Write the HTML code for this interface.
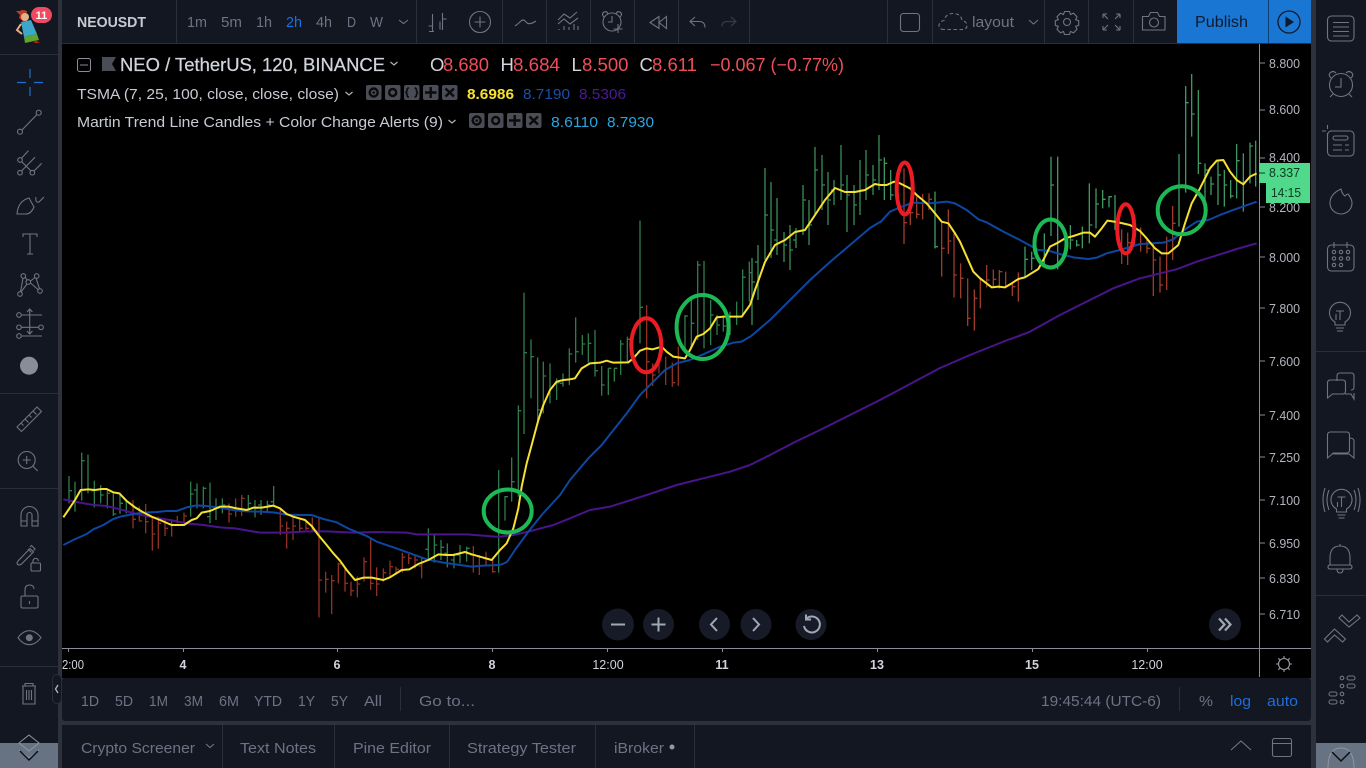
<!DOCTYPE html>
<html lang="en"><head><meta charset="utf-8"><title>NEOUSDT chart</title>
<style>
html,body{margin:0;padding:0;background:#000;width:1366px;height:768px;overflow:hidden}
svg{display:block;font-family:"Liberation Sans",Arial,sans-serif}
.i{fill:none;stroke:#6f7482;stroke-width:1.1}
.m{fill:#6c7384;font-size:15px}
.p{fill:#b2b5be;font-size:12.5px;text-anchor:start}
.t{fill:#d1d4dc;font-size:12.5px;text-anchor:middle}
.nb{fill:#171b27}
.ni{fill:none;stroke:#a0a8b4;stroke-width:2}
.tb{fill:#4a4d56}
.ti{fill:none;stroke:#0b0b0d;stroke-width:2.4}
.lg{stroke-width:.25px;paint-order:stroke}
</style></head><body>
<svg width="1366" height="768" viewBox="0 0 1366 768" xmlns="http://www.w3.org/2000/svg">
<rect width="1366" height="768" fill="#2d313c"/>
<!-- chart -->
<rect x="62" y="44" width="1249" height="634" fill="#000"/>
<!-- bars: first segment (zoom coords) -->
<g transform="translate(60,440) scale(.33333)" fill="none" stroke-width="4">
<path stroke="#2f7a4b" d="M27 108V190M27 152h9M45 125V215M65 38V182M65 62h9M84 44V160M103 122V202M103 152h-9M122 135V190M122 165h9M142 150V205M142 160h9M160 160V228M160 222h9M180 165V222M180 190h9M199 180V220M392 125V230M392 162h9M411 130V205M411 150h-9M430 140V205M430 145h9M450 128V250M450 230h-9M468 175V240M468 205h9M487 175V220M487 195h9M565 165V215M565 190h9M585 180V232M585 205h9M603 180V225M603 195h-9M622 182V215M622 195h9M641 138V200M641 185h-9M1105 265V358M1105 328h-9M1123 285V368M1123 315h9M1143 300V360M1143 322h9M1162 310V382M1162 340h-9M1182 340V385M1182 360h-9M1200 315V370M1200 345h-9M1220 320V365M1220 325h9M1316 90V398"/>
<path stroke="#8f3025" d="M219 180V265M219 238h9M238 200V245M238 243h9M257 192V280M257 245h9M277 230V332M277 282h9M295 230V326M295 250h9M315 235V288M315 265h9M335 238V290M335 252h-9M352 228V250M372 218V248M372 228h9M507 190V248M507 222h9M527 175V230M527 205h9M545 165V228M545 175h9M661 205V285M661 258h9M680 245V326M680 265h9M699 225V300M699 258h9M719 235V278M719 265h9M738 240V270M738 265h9M757 232V275M777 235V532M777 420h9M797 395V458M797 418h9M815 405V522M815 422h9M835 368V430M835 372h9M855 385V455M855 430h9M873 425V468M873 452h9M892 410V472M892 432h9M912 352V425M912 365h9M932 296V450M932 430h9M950 382V468M950 432h9M970 385V425M970 398h9M990 362V410M990 380h9M1008 380V400M1008 388h9M1027 338V398M1027 352h9M1046 342V372M1046 355h9M1065 345V385M1065 360h9M1085 352V415M1085 378h-9M1240 318V398M1240 345h-9M1258 345V405M1258 378h-9M1278 335V378M1298 360V398M1298 395h9"/>
</g>
<!-- bars: second segment -->
<g transform="translate(470,200) scale(.33333)" fill="none" stroke-width="4">
<path stroke="#2f7a4b" d="M105 888V962M105 890h9M125 772V905M125 845h9M145 616V890M145 632h9M162 278V702M162 458h9M183 418V595M183 470h9M203 472V672M203 630h9M220 485V640M220 528h9M240 490V610M240 582h-9M260 535V600M260 548h9M279 520V560M279 550h-9M298 445V555M298 462h9M317 352V488M317 455h9M337 405V465M337 432h9M355 400V488M355 430h9M375 390V530M375 512h9M395 498V587M395 555h9M415 505V585M415 505h9M433 505V545M433 505h9M452 420V525M452 432h9M472 410V490M472 418h9M510 62V430M510 322h9M645 345V460M645 348h9M664 290V440M664 370h9M683 183V420M683 195h9M702 183V445M722 300V435M722 345h9M741 345V405M741 375h9M760 350V395M760 378h9M780 335V405M800 305V375M818 208V350M818 232h9M838 185V305M838 218h9"/>
<path stroke="#8f3025" d="M530 315V595M530 485h9M548 490V558M548 525h9M567 460V520M587 470V555M607 488V560M607 548h9M625 440V558"/>
</g>
<!-- bars: gap segment (absolute) -->
<g fill="none" stroke="#388a58" stroke-width="1.33">
<path d="M752 258V325M752 282h3M758 245V300M758 262h-3M765 168V260M765 215h3M771 182V258M771 230h3M777 198V255M777 240h-3M784 232V262M784 245h3M790 225V270M790 250h3M796 228V248M796 240h-3M803 185V235M803 200h3M809 200V245M809 225h3M815 147V215M815 170h3M822 155V210M822 185h3M828 172V225M828 200h3M834 180V205M834 190h-3M841 145V200M841 185h3M847 175V232M847 195h3M854 185V225M854 205h3M860 160V215M860 190h3M866 150V200M866 175h3M873 165V195M873 180h3M879 135V190M879 160h3"/>
</g>
<!-- bars: third segment -->
<g transform="translate(880,70) scale(.33333)" fill="none" stroke-width="4">
<path stroke="#3f9660" d="M13 262V390M13 280h9M32 300V390M32 375h9M165 365V535M165 530h9M435 530V622M435 568h9M455 545V600M455 565h9M493 490V590M513 260V498M513 345h9M533 260V598M571 465V538M571 510h9M590 510V530M590 525h9M607 470V535M628 340V520M628 465h9M648 355V475M648 402h9M668 360V415M668 388h9M687 378V412M687 380h9M705 375V480M897 252V470M917 48V368M917 98h9M935 12V200M935 132h9M955 60V312M955 280h9M975 280V390M975 300h9M993 320V375M993 342h9M1014 270V405M1014 315h9M1033 300V410M1033 345h9M1052 330V385M1052 378h9M1070 222V385M1070 272h9M1090 250V425M1110 218V340M1110 228h9M1127 212V350"/>
<path stroke="#9c3a2b" d="M72 295V522M72 458h9M91 400V465M91 428h9M110 380V445M110 433h9M128 372V448M147 370V420M147 388h9M185 455V620M185 535h9M205 418V552M205 513h9M222 490V682M222 615h9M242 580V685M242 625h9M263 625V768M263 745h9M283 658V782M283 685h9M301 628V715M320 585V652M320 630h9M340 598V650M340 628h9M358 600V655M358 605h9M377 605V650M397 640V678M397 650h9M415 607V695M725 478V582M743 488V585M743 518h9M763 480V530M782 472V545M801 505V550M801 535h9M820 520V678M820 570h9M840 560V668M840 645h9M860 500V660M878 408V570M878 460h9"/>
</g>
<!-- purple -->
<g fill="none" stroke="#4a148c" stroke-linejoin="round">
<polyline transform="translate(60,440) scale(.33333)" stroke-width="6" points="10,178 60,188 100,195 140,198 180,208 230,222 280,232 330,240 380,250 430,255 480,262 525,265 600,278 680,278 740,274 800,274 880,278 950,276 1040,278 1070,283 1220,283 1320,291"/>
<polyline transform="translate(470,200) scale(.33333)" stroke-width="6" points="90,1010 130,1005 175,995 250,975 300,955 360,930 420,920 530,885 620,855 700,835 780,815 840,795"/>
<polyline stroke-width="2" points="750,465 770,455 795,442 820,430 850,415 880,400 910,384 940,368 970,355 1000,343 1010,339"/>
<polyline transform="translate(880,70) scale(.33333)" stroke-width="6" points="390,808 450,785 540,735 620,695 700,655 780,625 890,598 950,575 1030,550 1070,537 1130,520"/>
</g>
<!-- blue -->
<g fill="none" stroke="#0d47a1" stroke-linejoin="round">
<polyline transform="translate(60,440) scale(.33333)" stroke-width="6" points="10,315 40,300 80,282 100,268 130,255 160,237 180,230 220,222 250,218 290,216 320,213 350,213 380,202 410,196 440,198 480,203 520,210 560,214 600,215 640,217 680,224 720,225 755,225 790,237 830,247 870,268 920,288 950,305 1000,322 1050,340 1100,358 1150,368 1200,375 1235,380 1270,377 1320,375"/>
<polyline stroke-width="2" points="500,565 507,562 515,550"/>
<polyline transform="translate(470,200) scale(.33333)" stroke-width="6" points="135,1050 175,995 215,945 270,885 300,840 355,775 395,735 470,640 510,585 550,545 585,510 620,490 660,480 700,463 750,440 790,428 815,425 840,410"/>
<polyline stroke-width="2" points="750,337 770,320 790,300 810,280 830,262 850,245 870,228 880,222"/>
<polyline transform="translate(880,70) scale(.33333)" stroke-width="6" points="0,458 30,425 70,408 100,398 150,400 200,395 225,400 260,420 295,448 320,457 370,485 420,510 475,540 505,542 540,552 580,562 625,567 650,563 680,550 720,540 780,522 850,518 880,508 920,475 950,455 985,450 1020,435 1060,420 1130,395"/>
</g>
<!-- yellow -->
<g fill="none" stroke="#f7e12f" stroke-linejoin="round">
<polyline transform="translate(60,440) scale(.33333)" stroke-width="6" points="10,232 25,210 45,180 62,150 85,148 105,150 125,147 140,147 160,157 178,160 200,183 225,202 250,217 275,230 300,240 335,255 372,255 395,240 410,235 425,218 450,213 480,200 505,200 530,205 560,210 580,203 605,203 640,197 660,205 680,222 700,230 735,240 755,258 775,285 800,315 820,340 840,362 860,390 885,420 910,413 935,413 970,420 990,412 1025,390 1048,388 1075,372 1105,360 1135,343 1160,345 1180,345 1215,336 1235,343 1260,350 1295,360 1320,330"/>
<polyline transform="translate(470,200) scale(.33333)" stroke-width="6" points="90,1050 110,1030 130,985 145,925 155,860 170,790 185,735 205,660 220,615 240,570 260,545 280,540 300,538 315,535 335,505 360,490 390,488 410,482 430,488 475,487 490,475 510,452 530,445 548,448 575,440 590,455 610,470 645,475 660,450 680,410 700,402 720,385 740,352 760,350 790,350 815,350 840,315"/>
<polyline stroke-width="2" points="750,305 755,290 765,262 775,245 785,240 795,232 805,230 815,215 825,200 835,188 845,192 855,192 865,190 875,184 880,185"/>
<polyline transform="translate(880,70) scale(.33333)" stroke-width="6" points="0,345 20,345 42,335 60,340 90,355 110,375 140,400 165,430 185,455 205,460 225,490 240,515 260,560 280,605 300,625 335,652 355,650 375,652 395,640 415,627 435,622 475,597 495,560 510,530 530,520 555,505 580,498 610,488 630,488 645,500 665,475 682,452 710,456 750,465 780,483 800,505 825,535 845,550 865,550 895,525 915,460 935,400 960,355 990,295 1010,272 1030,270 1050,305 1070,330 1090,343 1110,320 1130,310"/>
</g>
<!-- annotations -->
<g fill="none" stroke-width="4">
<ellipse cx="507.7" cy="511" rx="24" ry="21.5" stroke="#1db954"/>
<ellipse cx="702.6" cy="327" rx="26" ry="32" stroke="#1db954"/>
<ellipse cx="1050.5" cy="243.5" rx="16" ry="24" stroke="#1db954"/>
<ellipse cx="1181.7" cy="210.3" rx="24" ry="24" stroke="#1db954"/>
<ellipse cx="646.3" cy="345.3" rx="15" ry="27" stroke="#ed1c24"/>
<ellipse cx="904.7" cy="188.5" rx="8" ry="26" stroke="#ed1c24"/>
<ellipse cx="1125.8" cy="228.8" rx="8.5" ry="24.5" stroke="#ed1c24"/>
</g>
<!-- axes -->
<path d="M1259.5 44V677M62 648.5H1311" stroke="#8a8d96" fill="none" shape-rendering="crispEdges"/>
<path d="M1259 63h6M1259 110h6M1259 158h6M1259 207h6M1259 257h6M1259 308h6M1259 361h6M1259 415h6M1259 457h6M1259 500h6M1259 543h6M1259 578h6M1259 614h6M183.5 648v4M337.5 648v4M492.5 648v4M607.5 648v4M722.5 648v4M877.5 648v4M1032.5 648v4M1147.5 648v4M68.5 648v4" stroke="#8a8d96" shape-rendering="crispEdges"/>
<text class="p" x="1269" y="68" textLength="31" lengthAdjust="spacingAndGlyphs">8.800</text>
<text class="p" x="1269" y="114" textLength="31" lengthAdjust="spacingAndGlyphs">8.600</text>
<text class="p" x="1269" y="162" textLength="31" lengthAdjust="spacingAndGlyphs">8.400</text>
<text class="p" x="1269" y="212" textLength="31" lengthAdjust="spacingAndGlyphs">8.200</text>
<text class="p" x="1269" y="262" textLength="31" lengthAdjust="spacingAndGlyphs">8.000</text>
<text class="p" x="1269" y="313" textLength="31" lengthAdjust="spacingAndGlyphs">7.800</text>
<text class="p" x="1269" y="366" textLength="31" lengthAdjust="spacingAndGlyphs">7.600</text>
<text class="p" x="1269" y="420" textLength="31" lengthAdjust="spacingAndGlyphs">7.400</text>
<text class="p" x="1269" y="462" textLength="31" lengthAdjust="spacingAndGlyphs">7.250</text>
<text class="p" x="1269" y="505" textLength="31" lengthAdjust="spacingAndGlyphs">7.100</text>
<text class="p" x="1269" y="548" textLength="31" lengthAdjust="spacingAndGlyphs">6.950</text>
<text class="p" x="1269" y="583" textLength="31" lengthAdjust="spacingAndGlyphs">6.830</text>
<text class="p" x="1269" y="619" textLength="31" lengthAdjust="spacingAndGlyphs">6.710</text>
<rect x="1259" y="163" width="51" height="20" fill="#50d98a"/>
<rect x="1266" y="183" width="44" height="20" fill="#50d98a"/>
<path d="M1259 173h6" stroke="#0b3d24"/>
<text x="1269" y="177" font-size="12.5" fill="#0d3a22" textLength="31" lengthAdjust="spacingAndGlyphs">8.337</text>
<text x="1271" y="197" font-size="12.5" fill="#0d3a22" textLength="30" lengthAdjust="spacingAndGlyphs">14:15</text>
<!-- time axis -->
<text x="62" y="669" font-size="12.5" fill="#d1d4dc" textLength="22" lengthAdjust="spacingAndGlyphs">2:00</text>
<text class="t" x="183" y="669" font-weight="700">4</text>
<text class="t" x="337" y="669" font-weight="700">6</text>
<text class="t" x="492" y="669" font-weight="700">8</text>
<text class="t" x="608" y="669">12:00</text>
<text class="t" x="722" y="669" font-weight="700">11</text>
<text class="t" x="877" y="669" font-weight="700">13</text>
<text class="t" x="1032" y="669" font-weight="700">15</text>
<text class="t" x="1147" y="669">12:00</text>
<g class="i" style="stroke:#9a9da6"><circle cx="1284" cy="664" r="5.5"/><path d="M1284 656v2M1284 670v2M1276 664h2M1290 664h2M1278.3 658.3l1.4 1.4M1288.3 668.3l1.4 1.4M1278.3 669.7l1.4-1.4M1288.3 659.7l1.4-1.4"/></g>
<!-- nav buttons -->
<circle class="nb" cx="618" cy="624.5" r="16"/><path class="ni" d="M611 624.5h14"/>
<circle class="nb" cx="658.5" cy="624.5" r="15.5"/><path class="ni" d="M651.5 624.5h14M658.5 617.5v14"/>
<circle class="nb" cx="714.5" cy="624.5" r="15.5"/><path class="ni" d="M717 618l-6 6.5 6 6.5"/>
<circle class="nb" cx="756" cy="624.5" r="15.5"/><path class="ni" d="M753 618l6 6.5-6 6.5"/>
<circle class="nb" cx="811" cy="624.5" r="15.5"/><path class="ni" d="M806 619a8 8 0 1 1-2 7M806 614.5v5h5"/>
<circle class="nb" cx="1225" cy="624.5" r="16"/><path class="ni" d="M1219 618.5l5.5 6-5.5 6M1225 618.5l5.5 6-5.5 6" style="stroke-width:2.2"/>
<!-- legend -->
<rect x="77.5" y="58.5" width="13" height="13" rx="2" fill="none" stroke="#8a8d96"/><path d="M80 65h8" stroke="#8a8d96"/>
<path d="M102 57h14l-4 7 4 7h-14z" fill="#4a4d58"/>
<text class="lg" x="120" y="71" font-size="18.5" fill="#d1d4dc" stroke="#d1d4dc" textLength="265" lengthAdjust="spacingAndGlyphs">NEO / TetherUS, 120, BINANCE</text>
<path d="M390.5 62l3.5 3 3.5-3" fill="none" stroke="#b2b5be" stroke-width="1.2"/>
<g font-size="18.5" fill="#f04d57">
<text x="430" y="71" style="fill:#d1d4dc">O</text><text x="443" y="71" textLength="46" lengthAdjust="spacingAndGlyphs">8.680</text>
<text x="500.5" y="71" style="fill:#d1d4dc">H</text><text x="513" y="71" textLength="47" lengthAdjust="spacingAndGlyphs">8.684</text>
<text x="571.5" y="71" style="fill:#d1d4dc">L</text><text x="582" y="71" textLength="46.5" lengthAdjust="spacingAndGlyphs">8.500</text>
<text x="639.5" y="71" style="fill:#d1d4dc">C</text><text x="652" y="71" textLength="45" lengthAdjust="spacingAndGlyphs">8.611</text>
<text x="710" y="71" textLength="134" lengthAdjust="spacingAndGlyphs">−0.067 (−0.77%)</text>
</g>
<text x="77" y="99" font-size="15" fill="#c8cbd3" textLength="262" lengthAdjust="spacingAndGlyphs">TSMA (7, 25, 100, close, close, close)</text>
<path d="M345.5 92l3.5 3 3.5-3" fill="none" stroke="#b2b5be" stroke-width="1.2"/>
<g>
<rect class="tb" x="366" y="85" width="15.5" height="15" rx="2"/><circle class="ti" cx="373.7" cy="92.5" r="4"/><circle cx="373.7" cy="92.5" r="1.3" fill="#0b0b0d"/>
<rect class="tb" x="385" y="85" width="15.5" height="15" rx="2"/><circle class="ti" cx="392.7" cy="92.5" r="3.5"/>
<rect class="tb" x="404" y="85" width="15.5" height="15" rx="2"/><path class="ti" d="M409 88q-2 0-2 2v1l-1 1.5 1 1.5v1q0 2 2 2M414.5 88q2 0 2 2v1l1 1.5-1 1.5v1q0 2-2 2" style="stroke-width:1.6"/>
<rect class="tb" x="423" y="85" width="15.5" height="15" rx="2"/><path class="ti" d="M430.7 87v11M425 92.5h11.5"/>
<rect class="tb" x="442" y="85" width="15.5" height="15" rx="2"/><path class="ti" d="M445.5 88.5l8.500 8M454 88.5l-8.500 8"/>
</g>
<text x="467" y="99" font-size="15" font-weight="700" fill="#f7e12f" textLength="47" lengthAdjust="spacingAndGlyphs">8.6986</text>
<text x="523" y="99" font-size="15" fill="#1a4fa8" textLength="47" lengthAdjust="spacingAndGlyphs">8.7190</text>
<text x="579" y="99" font-size="15" fill="#4a1a96" textLength="47" lengthAdjust="spacingAndGlyphs">8.5306</text>
<text x="77" y="127" font-size="15" fill="#c8cbd3" textLength="366" lengthAdjust="spacingAndGlyphs">Martin Trend Line Candles + Color Change Alerts (9)</text>
<path d="M448.5 120l3.5 3 3.5-3" fill="none" stroke="#b2b5be" stroke-width="1.2"/>
<g>
<rect class="tb" x="469" y="113" width="15.5" height="15" rx="2"/><circle class="ti" cx="476.7" cy="120.5" r="4"/><circle cx="476.7" cy="120.5" r="1.3" fill="#0b0b0d"/>
<rect class="tb" x="488" y="113" width="15.5" height="15" rx="2"/><circle class="ti" cx="495.7" cy="120.5" r="3.5"/>
<rect class="tb" x="507" y="113" width="15.5" height="15" rx="2"/><path class="ti" d="M514.7 115v11M509 120.5h11.5"/>
<rect class="tb" x="526" y="113" width="15.5" height="15" rx="2"/><path class="ti" d="M529.5 116.5l8.5 8M538 116.5l-8.5 8"/>
</g>
<text x="551" y="127" font-size="15" fill="#2aa6df" textLength="47" lengthAdjust="spacingAndGlyphs">8.6110</text>
<text x="607" y="127" font-size="15" fill="#2aa6df" textLength="47" lengthAdjust="spacingAndGlyphs">8.7930</text>

<!-- top toolbar -->
<rect x="62" y="0" width="1249" height="43" fill="#131722"/>
<path d="M176.5 0v43M416.5 0v43M502.5 0v43M546.5 0v43M590.5 0v43M634.5 0v43M678.5 0v43M749.5 0v43M887.5 0v43M932.5 0v43M1044.5 0v43M1088.5 0v43M1133.5 0v43" stroke="#2a2e39"/>
<text x="77" y="27" font-size="14.5" font-weight="700" fill="#c6cad2" textLength="69" lengthAdjust="spacingAndGlyphs">NEOUSDT</text>
<text class="m" x="187" y="27" textLength="20" lengthAdjust="spacingAndGlyphs">1m</text>
<text class="m" x="221" y="27" textLength="21" lengthAdjust="spacingAndGlyphs">5m</text>
<text class="m" x="256" y="27" textLength="16" lengthAdjust="spacingAndGlyphs">1h</text>
<text x="286" y="27" font-size="15" fill="#1c6fdc" textLength="16" lengthAdjust="spacingAndGlyphs">2h</text>
<text class="m" x="316" y="27" textLength="16" lengthAdjust="spacingAndGlyphs">4h</text>
<text class="m" x="347" y="27" textLength="9" lengthAdjust="spacingAndGlyphs">D</text>
<text class="m" x="370" y="27" textLength="13" lengthAdjust="spacingAndGlyphs">W</text>
<g class="i">
<path d="M399 20l4.500 3.500 4.500-3.500"/>
<path d="M432.500 14v17M428.500 26h4M442.500 13v17M442.500 19h4M429 31.500h5M440 21.500v8"/>
<circle cx="480" cy="22" r="10.500"/><path d="M480 16.500v11M474.500 22h11"/>
<path d="M515 26q3-2 6-5 2-2 4 0l2 2q3 2 9-2"/>
<path d="M558 20l6-6 6 4 7-6M558 24l6-5 6 5 8-6M559 30v-1M564 30v-4M569 30v-3M574 30v-6M578 30v-4"/>
<circle cx="612" cy="22" r="9"/><path d="M612 16v6h-4M604 17q-3-3 0-5 3-1 4 2M620 17q3-3 0-5-3-1-4 2M618 24v9M613.500 29h9"/>
<path d="M659 16.500l-9 6 9 6zM666.500 16.500l-7.500 6 7.500 6z"/>
<path d="M695 17l-5 4.500 5 4.500M690 21.500h9q6 0 6 6"/>
</g>
<path d="M731 17l5 4.500-5 4.500M736 21.500h-9q-5 0-5 5" fill="none" stroke="#363a45" stroke-width="1.200"/>
<g class="i">
<rect x="900.500" y="13.500" width="19" height="18" rx="3"/>
<path d="M944 29.500q-5 0-5-4 0-4 5-5 2-7 9-7 8 0 9 7 5 1 5 5 0 4-5 4z" stroke-dasharray="3.500 2.500"/>
<path d="M1029 20l4.500 4 4.500-4"/>
<circle cx="1067" cy="22" r="3.500"/><path d="M1064.500 11.500h5l1 3 3-1.300 3.500 3.500-1.300 3 3 1v4.600l-3 1 1.300 3-3.500 3.500-3-1.300-1 3h-5l-1-3-3 1.300-3.500-3.500 1.300-3-3-1v-4.600l3-1-1.300-3 3.500-3.500 3 1.300z"/>
<path d="M1103 14l5 5M1103 14h4M1103 14v4M1120 14l-5 5M1120 14h-4M1120 14v4M1103 30l5-5M1103 30h4M1103 30v-4M1120 30l-5-5M1120 30h-4M1120 30v-4"/>
<path d="M1142.500 16.500h6l2-4h7l2 4h5.500v13.500h-22.500z"/><circle cx="1154" cy="22.500" r="4.500"/>
</g>
<text x="972" y="27" font-size="15" fill="#6f7482" textLength="42" lengthAdjust="spacingAndGlyphs">layout</text>
<rect x="1177" y="0" width="134" height="43" fill="#1976d2"/>
<path d="M1268.500 0v43" stroke="#0e3f74"/>
<text x="1195" y="27" font-size="16" fill="#0f1a2e" textLength="53" lengthAdjust="spacingAndGlyphs">Publish</text>
<circle cx="1289" cy="22" r="11" fill="none" stroke="#0f1a2e" stroke-width="1.300"/><path d="M1285.500 16.500l8.500 5.500-8.500 5.500z" fill="#0f1a2e"/>
<rect x="62" y="43" width="1249" height="1" fill="#2a2e39"/>

<!-- left toolbar -->
<rect x="0" y="0" width="58" height="768" fill="#131722"/>
<path d="M0 54.500h58M0 393.500h58M0 488.500h58M0 666.500h58" stroke="#2a2e39"/>
<g>
<path d="M27 11q-5-2-7 0l-4 0 4 4-1 3 5 4z" fill="#c23c22"/>
<circle cx="25" cy="17" r="4" fill="#e3b08a"/>
<path d="M21 22l10-2 6 14-13 3z" fill="#3ea7c9"/>
<path d="M21 24l-4 6 5 4" fill="none" stroke="#e3b08a" stroke-width="2"/>
<path d="M24 37l13-3 2 6-14 3z" fill="#5da52d"/>
<path d="M35 40l5 3h-6z" fill="#b3261e"/>
<rect x="31" y="7" width="21" height="16" rx="8" fill="#ef4a60"/>
<text x="41.500" y="19" font-size="11" font-weight="700" fill="#fff" text-anchor="middle">11</text>
</g>
<path d="M17 82.500h9M34 82.500h9M30 69v9M30 87v9" stroke="#1e6fd0" stroke-width="1.200" fill="none"/>
<g class="i">
<circle cx="38.700" cy="112.700" r="2.500"/><circle cx="20" cy="131.700" r="2.500"/><path d="M37 114.500L22 130"/>
<circle cx="20" cy="160" r="2.300"/><circle cx="20" cy="172.700" r="2.300"/><circle cx="32.300" cy="172.700" r="2.300"/>
<path d="M21.500 171L35 157.300M34 171l7.700-7.700M21.500 158.300l7-7.700M21.700 161.700L31 171"/>
<path d="M17 214q1-13 12-16l5 9q-3 7-8 7zM36 197q-1 6 3 5l5-5"/>
<path d="M23 237v-3h14v3M30 234v20M27 254h6"/>
<circle cx="23.300" cy="276" r="2.300"/><circle cx="36.700" cy="276" r="2.300"/><circle cx="28.300" cy="282" r="2.300"/><circle cx="20" cy="294" r="2.300"/><circle cx="40" cy="291" r="2.300"/>
<path d="M23 278.300L20.500 291.700M36 278L39.500 288.700M25 277l2 3M30.500 281l4.500-3.500M30.500 283l7.500 6.500M27 284l-6 8"/>
<circle cx="19" cy="315" r="2.300"/><circle cx="19" cy="327.300" r="2.300"/><circle cx="19" cy="336" r="2.300"/><circle cx="41" cy="327.300" r="2.300"/>
<path d="M21.500 315H42M21.500 327.300H38.500M21.500 336H42M29.700 309v24M27 312l2.700-3 2.700 3M27 331l2.700 3 2.700-3"/>
<circle cx="29" cy="365.700" r="9" style="fill:#8a8d99;stroke:none"/>
<path d="M18 428l20-20 4.500 4.500-20 20zM22 424l2.500 2.500M26 420l3.500 3.500M30 416l2.500 2.500M34 412l3.500 3.500" transform="translate(-1 -1)"/>
<circle cx="26.700" cy="460" r="8.500"/><path d="M32.700 466l5 5M26.700 456v8M22.700 460h8"/>
<path d="M21 526v-11a8.500 8.500 0 0 1 17 0v11h-6v-11a2.500 2.500 0 0 0-5 0v11zM21 521h6M32 521h6"/>
<path d="M18 561l-1 2 .5 1.500 2 .5 2-1 12-12-3.500-3.500zM28 549l3.500 3.500M30 547l1.500-1.500 3.500 3.500-1.500 1.500"/>
<rect x="31" y="563" width="9.500" height="8" rx="1"/><path d="M33 563v-2a2.700 2.700 0 0 1 5.400 0"/>
<rect x="21" y="596" width="17" height="12" rx="1.500"/><path d="M25 596v-6q0-5 4.500-5t4.500 4M29.500 601v3"/>
<path d="M18 637.700q5-7 11.300-7t11.700 7q-5.400 7-11.700 7t-11.300-7z"/><circle cx="29.300" cy="637.700" r="3.500" style="fill:#6f7482;stroke:none"/>
<path d="M22 686h14M25 686v-2.500h8v2.500M23 686v18h12v-18M26.500 690v10M29 690v10M31.500 690v10"/>
</g>
<rect x="52.500" y="674.500" width="9" height="29" rx="4.500" fill="#131722" stroke="#2a2e39"/>
<path d="M58 685l-2.500 4 2.500 4" fill="none" stroke="#b2b5be" stroke-width="1.300"/>
<rect x="0" y="743" width="58" height="25" fill="#677382"/>
<path d="M19 743l10-8 10 8-10 8zM19 750l10 8 10-8" fill="none" stroke="#8d96a3"/>
<path d="M20 751l9 9 9-9" fill="none" stroke="#0c0e14" stroke-width="1.500"/>

<!-- right panel -->
<rect x="1316" y="0" width="50" height="768" fill="#131722"/>
<path d="M1316 351.500h50M1316 595.500h50" stroke="#2a2e39"/>
<g class="i">
<rect x="1327.500" y="16" width="26.500" height="25" rx="4"/><path d="M1333 22.500h16M1333 27h16M1333 31.500h16M1333 36h16"/>
<circle cx="1341" cy="85" r="11.500"/><path d="M1341 78v9h-6M1331 78q-3-3-1-5 3-3 6 0M1351 78q3-3 1-5-3-3-6 0M1333 94l-3 3M1349 94l3 3"/>
<rect x="1327.500" y="131" width="26.500" height="25" rx="4"/><path d="M1327.500 125v4M1327.500 133v4M1322 131h4M1330 131h4"/><rect x="1333" y="136" width="15" height="4" rx="2"/><path d="M1333 145h9M1345 145h4M1333 150h9M1345 150h4"/>
<path d="M1341 189q1 5 4 7 2-2 3-2 4 5 4 9a11 11 0 0 1-22 0q0-9 11-14z"/>
<rect x="1327.500" y="245" width="26.500" height="26" rx="4"/><path d="M1334 242v6M1347 242v6"/><circle cx="1334" cy="252" r="1.700"/><circle cx="1341" cy="252" r="1.700"/><circle cx="1348" cy="252" r="1.700"/><circle cx="1334" cy="258.500" r="1.700"/><circle cx="1341" cy="258.500" r="1.700"/><circle cx="1348" cy="258.500" r="1.700"/><circle cx="1334" cy="265" r="1.700"/><circle cx="1341" cy="265" r="1.700"/>
<path d="M1335 322a10.500 10.500 0 1 1 10 0v3h-10zM1336 320v-6M1340 320v-9M1336 311h8M1336 328h8M1337 331h6"/>
<path d="M1337 381v-5q0-3 3-3h11q3 0 3 3v11q0 3-3 3M1327.500 383q0-3 3-3h12q3 0 3 3v8q0 3-3 3h-10l-5 4zM1345 394q3 0 6 0l3 5v-6"/>
<path d="M1327.500 435q0-3 3-3h16q3 0 3 3v15q0 3-3 3h-13l-6 5zM1349 438q5 0 5 3v17l-5-4h-14q-2 0-3-1"/>
<path d="M1336.500 509a10.500 10.500 0 1 1 10 0v3h-10zM1337.500 507v-5M1341.500 507v-10M1337.500 497h8M1337.500 515h8M1338.500 518h6M1329 490q-4 10 0 20M1325 488q-4 12 0 24M1354 490q4 10 0 20M1358 488q4 12 0 24"/>
<path d="M1340 546q-10 0-10 12v7h20v-7q0-12-10-12zM1328 567q0-2 2-2h20q2 0 2 2t-2 2h-20q-2 0-2-2zM1337 569q0 4 3 4t3-4M1340 546v-2"/>
<path d="M1324.500 639l10-10 11 10-3 3-8-7-7 7zM1339 618l10 9 11-9-3-3-8 7-7-7z"/>
<circle cx="1342" cy="678" r="1.800"/><circle cx="1342" cy="686" r="1.800"/><circle cx="1342" cy="694" r="1.800"/><circle cx="1342" cy="702" r="1.800"/>
<rect x="1347" y="676" width="8" height="4" rx="2"/><rect x="1347" y="684" width="8" height="4" rx="2"/><rect x="1329" y="692" width="8" height="4" rx="2"/><rect x="1329" y="700" width="8" height="4" rx="2"/>
</g>
<rect x="1316" y="743" width="50" height="25" fill="#677382"/>
<path d="M1328 768q0-20 13-20t13 20" fill="none" stroke="#8d96a3"/>
<path d="M1332 752l9 9 9-9" fill="none" stroke="#0c0e14" stroke-width="1.500"/>

<!-- bottom bar -->
<rect x="62" y="678" width="1249" height="43" rx="3" fill="#131722"/>
<text class="m" x="81" y="706" textLength="18" lengthAdjust="spacingAndGlyphs">1D</text>
<text class="m" x="115" y="706" textLength="18" lengthAdjust="spacingAndGlyphs">5D</text>
<text class="m" x="149" y="706" textLength="19" lengthAdjust="spacingAndGlyphs">1M</text>
<text class="m" x="184" y="706" textLength="19" lengthAdjust="spacingAndGlyphs">3M</text>
<text class="m" x="219" y="706" textLength="20" lengthAdjust="spacingAndGlyphs">6M</text>
<text class="m" x="254" y="706" textLength="28" lengthAdjust="spacingAndGlyphs">YTD</text>
<text class="m" x="298" y="706" textLength="17" lengthAdjust="spacingAndGlyphs">1Y</text>
<text class="m" x="331" y="706" textLength="17" lengthAdjust="spacingAndGlyphs">5Y</text>
<text class="m" x="364" y="706" textLength="18" lengthAdjust="spacingAndGlyphs">All</text>
<path d="M400.500 687v24M1179.500 687v24" stroke="#2a2e39"/>
<text class="m" x="419" y="706" textLength="56" lengthAdjust="spacingAndGlyphs">Go to...</text>
<text class="m" x="1041" y="706" textLength="120" lengthAdjust="spacingAndGlyphs">19:45:44 (UTC-6)</text>
<text class="m" x="1199" y="706" textLength="14" lengthAdjust="spacingAndGlyphs">%</text>
<text x="1230" y="706" font-size="15" fill="#1c6fdc" textLength="21" lengthAdjust="spacingAndGlyphs">log</text>
<text x="1267" y="706" font-size="15" fill="#1c6fdc" textLength="31" lengthAdjust="spacingAndGlyphs">auto</text>

<!-- tabs -->
<rect x="62" y="725" width="1249" height="43" fill="#131722"/>
<path d="M222.500 725v43M334.500 725v43M449.500 725v43M595.500 725v43M694.500 725v43" stroke="#2a2e39"/>
<text class="m" x="81" y="753" textLength="114" lengthAdjust="spacingAndGlyphs">Crypto Screener</text>
<path d="M206 744l4 3.500 4-3.500" fill="none" stroke="#6f7482" stroke-width="1.100"/>
<text class="m" x="240" y="753" textLength="76" lengthAdjust="spacingAndGlyphs">Text Notes</text>
<text class="m" x="353" y="753" textLength="78" lengthAdjust="spacingAndGlyphs">Pine Editor</text>
<text class="m" x="467" y="753" textLength="109" lengthAdjust="spacingAndGlyphs">Strategy Tester</text>
<text class="m" x="614" y="753" textLength="50" lengthAdjust="spacingAndGlyphs">iBroker</text>
<circle cx="672" cy="747" r="2.500" fill="#9598a1"/>
<path d="M1231 750l10-9 10 9" fill="none" stroke="#6f7482" stroke-width="1.100"/>
<rect x="1272.500" y="738.500" width="19" height="18" rx="2" fill="none" stroke="#6f7482" stroke-width="1.100"/><path d="M1272.500 743.500h19" stroke="#6f7482"/>
</svg>
</body></html>
